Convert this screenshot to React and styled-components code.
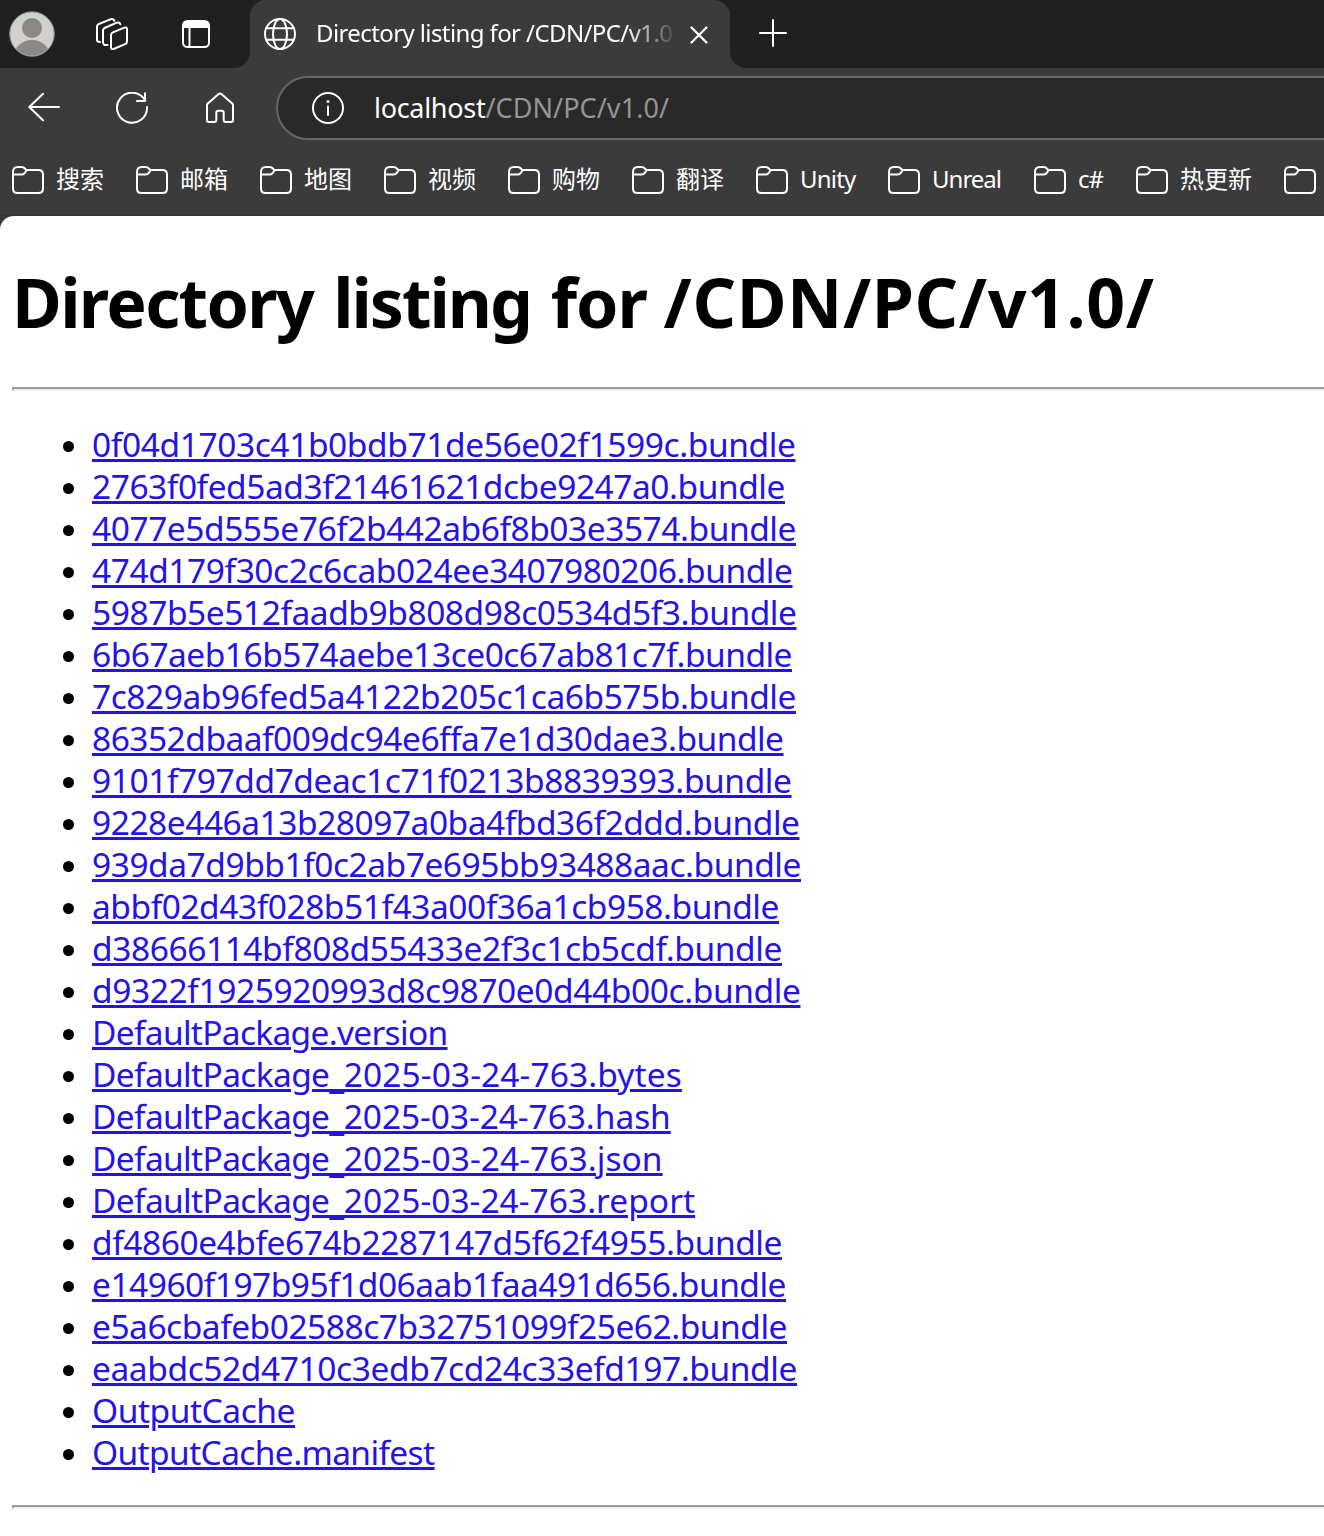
import React from "react";
import styled, { createGlobalStyle } from "styled-components";

const GlobalStyle = createGlobalStyle`
  * { box-sizing: border-box; }
  html, body { margin: 0; background: #fff; }
  body {
    font-family: "Noto Sans", "Noto Sans CJK SC", sans-serif;
    overflow: hidden;
  }
`;

const Window = styled.div`
  width: 1324px;
  height: 1536px;
  overflow: hidden;
  background: #3b3b3b;
`;

const TabStrip = styled.div`
  display: flex;
  height: 68px;
`;

const StripStart = styled.div`
  display: flex;
  align-items: center;
  width: 250px;
  padding-left: 9px;
  background: #202020;
  border-bottom-right-radius: 16px;
`;

const StripEnd = styled.div`
  flex: 1;
  padding: 19px 0 0 29px;
  background: #202020;
  border-bottom-left-radius: 16px;
`;

const StripIcon = styled.div`
  display: flex;
  margin-left: ${(p) => p.$gap}px;
`;

const TabSlot = styled.div`
  width: 480px;
  background: linear-gradient(#202020 0 20px, #3b3b3b 20px);
`;

const Tab = styled.div`
  display: flex;
  align-items: center;
  height: 68px;
  padding-left: 14px;
  border-radius: 16px 16px 0 0;
  background: #3b3b3b;
`;

const TabTitle = styled.div`
  width: 357px;
  margin: 0 17px 2px 20px;
  overflow: hidden;
  white-space: pre;
  font-size: 24px;
  line-height: 36px;
  letter-spacing: -0.6px;
  color: #fff;
  mask-image: linear-gradient(90deg, #000 310px, transparent 362px);
`;

const CloseButton = styled.div`
  display: flex;
  padding-top: 2px;
`;

const Toolbar = styled.div`
  display: flex;
  align-items: center;
  height: 80px;
  padding-left: 28px;
`;

const ToolButton = styled.div`
  display: flex;
  width: 32px;
  margin-right: 56px;
`;

const AddressBar = styled.div`
  display: flex;
  flex: none;
  align-items: center;
  width: 1100px;
  height: 64px;
  margin-left: -16px;
  padding-left: 34px;
  border: 2px solid #666;
  border-radius: 32px;
  background: #292929;
`;

const Url = styled.div`
  display: flex;
  margin-left: 30px;
  font-size: 27px;
  line-height: 40px;
`;

const Host = styled.span`
  color: #fff;
  letter-spacing: -0.3px;
`;

const Path = styled.span`
  color: #949494;
  letter-spacing: 0.08px;
`;

const Bookmarks = styled.div`
  display: flex;
  align-items: center;
  gap: 32px;
  height: 68px;
  padding: 0 0 4px 12px;
  border-bottom: 1px solid #333;
`;

const Bookmark = styled.div`
  display: flex;
  flex: none;
  align-items: center;
  gap: 12px;
`;

const BookmarkLabel = styled.span`
  width: ${(p) => p.$width}px;
  margin-top: -1px;
  white-space: nowrap;
  font-size: 24px;
  line-height: 36px;
  letter-spacing: ${(p) => p.$track || 0}px;
  color: #fff;
`;

const Page = styled.main`
  height: 1320px;
  padding: 44px 0 0 12px;
  border-top-left-radius: 14px;
  background: #fff;
`;

const Title = styled.h1`
  margin: 0;
  font-size: 68px;
  line-height: 84px;
  font-weight: 700;
  white-space: pre;
  color: #000;
`;

const Word = styled.span`
  letter-spacing: ${(p) => p.$track}px;
  word-spacing: ${(p) => p.$space || 0}px;
`;

const Rule = styled.hr`
  width: 1400px;
  height: 4px;
  margin: ${(p) => p.$top}px 0 0;
  border: 2px solid;
  border-color: #9a9a9a #eee #eee #9a9a9a;
`;

const FileList = styled.ul`
  margin: 32px 0 0;
  padding: 0 0 0 51px;
  list-style: none;
`;

const FileRow = styled.li`
  display: flex;
  align-items: center;
  gap: 18px;
  height: 42px;
  &::before {
    content: "";
    width: 11px;
    height: 11px;
    margin-top: 5px;
    border-radius: 50%;
    background: #000;
  }
`;

const FileLink = styled.a`
  font-size: 33.5px;
  line-height: 42px;
  letter-spacing: ${(p) => p.$track}px;
  white-space: nowrap;
  color: #2412e8;
  text-decoration: underline;
  text-decoration-thickness: 3px;
  text-underline-offset: 2px;
`;

const Stem = styled.span`
  letter-spacing: -0.65px;
`;

const LowLine = styled.span`
  display: inline-block;
  height: 42px;
  line-height: 46px;
  vertical-align: top;
  letter-spacing: -0.5px;
  border-bottom: 0;
  background: linear-gradient(#2412e8, #2412e8) 0 36px / 100% 3px no-repeat;
`;

const Stroke = ({ w = 32, h = 32, sw = 2, children }) => (
  <svg
    width={w}
    height={h}
    viewBox={`0 0 ${w} ${h}`}
    fill="none"
    stroke="#fff"
    strokeWidth={sw}
    strokeLinecap="round"
    strokeLinejoin="round"
  >
    {children}
  </svg>
);

const Avatar = () => (
  <svg width="46" height="46" viewBox="0 0 46 46">
    <defs>
      <clipPath id="face">
        <circle cx="23" cy="23" r="22" />
      </clipPath>
    </defs>
    <circle cx="23" cy="23" r="22" fill="#d2d0cd" />
    <g clipPath="url(#face)" fill="#8b8988">
      <circle cx="23" cy="17" r="10" />
      <ellipse cx="23" cy="45" rx="18" ry="16" />
    </g>
    <circle cx="23" cy="23" r="22.2" fill="none" stroke="#aaa8a6" />
  </svg>
);

const WorkspacesIcon = () => (
  <Stroke>
    <path d="M15 17.2Q15 15.2 16.9 14.4L28.4 9.6Q31 8.8 31 11.4V23.4Q31 25.4 29.1 26.2L17.6 31Q15 31.8 15 29.2Z" />
    <path d="M11.5 27Q7 27.6 7 24.5V12.5Q7 10.5 9 9.7L20.8 4.7Q23.6 4 24.3 6.2" />
    <path d="M4 24Q1 24 1 22V8.6Q1 6.8 2.8 6L15 1.1Q17.6 .6 18.4 2.8" />
  </Stroke>
);

const TabActionsIcon = () => (
  <Stroke w={28} h={28}>
    <rect x="1" y="1" width="26" height="26" rx="4.5" />
    <path d="M1 8V5Q1 1 5 1H23Q27 1 27 5V8Z" fill="#fff" stroke="none" />
    <path d="M7.5 8V26.5" strokeLinecap="butt" />
  </Stroke>
);

const GlobeIcon = () => (
  <Stroke>
    <circle cx="16" cy="16" r="15" />
    <ellipse cx="16" cy="16" rx="7" ry="15" />
    <path d="M2.5 10.2H29.5M2.5 21.8H29.5" />
  </Stroke>
);

const CloseIcon = () => (
  <Stroke w={18} h={18} sw={2.2}>
    <path d="M1.5 1.5L16.5 16.5M16.5 1.5L1.5 16.5" />
  </Stroke>
);

const PlusIcon = () => (
  <Stroke w={28} h={28}>
    <path d="M14 1V27M1 14H27" />
  </Stroke>
);

const BackIcon = () => (
  <Stroke>
    <path d="M31 15H1.5M15 1.8L1.3 15L15 28.2" />
  </Stroke>
);

const RefreshIcon = () => (
  <Stroke>
    <path d="M31 15A15 15 0 1 1 29.2 8.6M29 1.2V9H21" />
  </Stroke>
);

const HomeIcon = () => (
  <Stroke>
    <path d="M3 13.2Q3 12.2 3.8 11.5L14.6 2.1Q16 1 17.4 2.1L28.2 11.5Q29 12.2 29 13.2V28Q29 30 27 30H21.7Q19.700 30 19.700 28V20.8Q19.700 18.800 17.700 18.800H14.300Q12.300 18.800 12.300 20.800V28Q12.300 30 10.300 30H5Q3 30 3 28Z" />
  </Stroke>
);

const InfoIcon = () => (
  <Stroke>
    <circle cx="16" cy="16" r="15" />
    <path d="M16 14.5V23" />
    <circle cx="16" cy="9.5" r="1.5" fill="#fff" stroke="none" />
  </Stroke>
);

const FolderIcon = () => (
  <Stroke w={32} h={28}>
    <path d="M1 6Q1 1 6 1H9.5Q11.5 1 12.8 2.5L14.3 4H26.5Q31 4 31 8.5V22.5Q31 27 26.5 27H5.5Q1 27 1 22.5Z" />
    <path d="M1.5 8.5H9.5Q11.3 8.5 12.5 7.2L14.6 4.4" />
  </Stroke>
);

const bookmarks = [
  ["搜索", 48],
  ["邮箱", 48],
  ["地图", 48],
  ["视频", 48],
  ["购物", 48],
  ["翻译", 48],
  ["Unity", 56, -0.8],
  ["Unreal", 70, -1],
  ["c#", 26, -1],
  ["热更新", 72],
  ["", 48],
];

const heading = [
  ["Directory ", -1.65, 4],
  ["listing ", -2, 4],
  ["for ", -1],
  ["/CDN/PC/v1.0/", 0.6],
];

const files = [
  ["0f04d1703c41b0bdb71de56e02f1599c.bundle", -0.397],
  ["2763f0fed5ad3f21461621dcbe9247a0.bundle", -0.457],
  ["4077e5d555e76f2b442ab6f8b03e3574.bundle", -0.452],
  ["474d179f30c2c6cab024ee3407980206.bundle", -0.433],
  ["5987b5e512faadb9b808d98c0534d5f3.bundle", -0.438],
  ["6b67aeb16b574aebe13ce0c67ab81c7f.bundle", -0.507],
  ["7c829ab96fed5a4122b205c1ca6b575b.bundle", -0.443],
  ["86352dbaaf009dc94e6ffa7e1d30dae3.bundle", -0.506],
  ["9101f797dd7deac1c71f0213b8839393.bundle", -0.423],
  ["9228e446a13b28097a0ba4fbd36f2ddd.bundle", -0.468],
  ["939da7d9bb1f0c2ab7e695bb93488aac.bundle", -0.458],
  ["abbf02d43f028b51f43a00f36a1cb958.bundle", -0.456],
  ["d38666114bf808d55433e2f3c1cb5cdf.bundle", -0.421],
  ["d9322f1925920993d8c9870e0d44b00c.bundle", -0.398],
  ["DefaultPackage.version", -0.696],
  ["DefaultPackage_2025-03-24-763.bytes", 0.1],
  ["DefaultPackage_2025-03-24-763.hash", -0.07],
  ["DefaultPackage_2025-03-24-763.json", 0.06],
  ["DefaultPackage_2025-03-24-763.report", 0.02],
  ["df4860e4bfe674b2287147d5f62f4955.bundle", -0.435],
  ["e14960f197b95f1d06aab1faa491d656.bundle", -0.498],
  ["e5a6cbafeb02588c7b32751099f25e62.bundle", -0.478],
  ["eaabdc52d4710c3edb7cd24c33efd197.bundle", -0.407],
  ["OutputCache", -0.456],
  ["OutputCache.manifest", -0.625],
];

function FileName({ name }) {
  const [stem, rest] = name.split("_");
  if (!rest) return name;
  return (
    <>
      <Stem>{stem}</Stem>
      <LowLine>_</LowLine>
      {rest}
    </>
  );
}

export default function App() {
  return (
    <>
      <GlobalStyle />
      <Window>
        <TabStrip>
          <StripStart>
            <Avatar />
            <StripIcon $gap={41}><WorkspacesIcon /></StripIcon>
            <StripIcon $gap={54}><TabActionsIcon /></StripIcon>
          </StripStart>
          <TabSlot>
            <Tab>
              <GlobeIcon />
              <TabTitle>Directory listing for /CDN/PC/v1.0</TabTitle>
              <CloseButton><CloseIcon /></CloseButton>
            </Tab>
          </TabSlot>
          <StripEnd>
            <PlusIcon />
          </StripEnd>
        </TabStrip>
        <Toolbar>
          <ToolButton><BackIcon /></ToolButton>
          <ToolButton><RefreshIcon /></ToolButton>
          <ToolButton><HomeIcon /></ToolButton>
          <AddressBar>
            <InfoIcon />
            <Url>
              <Host>localhost</Host>
              <Path>/CDN/PC/v1.0/</Path>
            </Url>
          </AddressBar>
        </Toolbar>
        <Bookmarks>
          {bookmarks.map(([label, width, track], i) => (
            <Bookmark key={i}>
              <FolderIcon />
              {label && <BookmarkLabel $width={width} $track={track}>{label}</BookmarkLabel>}
            </Bookmark>
          ))}
        </Bookmarks>
        <Page>
          <Title>
            {heading.map(([word, track, space]) => (
              <Word key={word} $track={track} $space={space}>{word}</Word>
            ))}
          </Title>
          <Rule $top={43} />
          <FileList>
            {files.map(([name, track]) => (
              <FileRow key={name}>
                <FileLink $track={track}><FileName name={name} /></FileLink>
              </FileRow>
            ))}
          </FileList>
          <Rule $top={32} />
        </Page>
      </Window>
    </>
  );
}
